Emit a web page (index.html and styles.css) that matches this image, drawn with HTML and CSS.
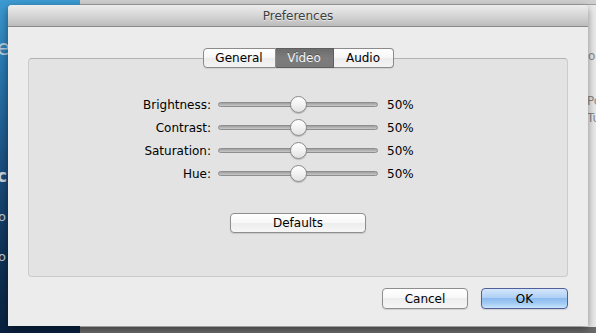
FILE: index.html
```html
<!DOCTYPE html>
<html lang="en">
<head>
  <meta charset="UTF-8">
  <meta name="viewport" content="width=device-width, initial-scale=1.0">
  <title>Preferences</title>
  <link rel="stylesheet" href="styles.css">
</head>
<body>
  <!-- Windows behind the sheet -->
  <div class="back back-left">
    <span class="frag frag-e">e</span>
    <span class="frag frag-c">c</span>
    <span class="frag frag-o1">o</span>
    <span class="frag frag-o2">o</span>
  </div>
  <div class="back back-right">
    <span class="frag frag-r1">o</span>
    <span class="frag frag-r2">Po</span>
    <span class="frag frag-r3">Tu</span>
  </div>

  <!-- Preferences dialog -->
  <div class="dialog">
    <div class="titlebar">Preferences</div>
    <div class="dialog-body">
      <div class="tabs">
        <button class="tab tab-general">General</button>
        <button class="tab tab-video active">Video</button>
        <button class="tab tab-audio">Audio</button>
      </div>

      <div class="panel">
        <div class="sliders">
          <label>Brightness:</label>
          <div class="slider"><span class="track"></span><span class="knob" style="left: 50%;"></span></div>
          <span class="value">50%</span>

          <label>Contrast:</label>
          <div class="slider"><span class="track"></span><span class="knob" style="left: 50%;"></span></div>
          <span class="value">50%</span>

          <label>Saturation:</label>
          <div class="slider"><span class="track"></span><span class="knob" style="left: 50%;"></span></div>
          <span class="value">50%</span>

          <label>Hue:</label>
          <div class="slider"><span class="track"></span><span class="knob" style="left: 50%;"></span></div>
          <span class="value">50%</span>
        </div>
        <button class="btn btn-defaults">Defaults</button>
      </div>

      <div class="actions">
        <button class="btn btn-cancel">Cancel</button>
        <button class="btn btn-ok">OK</button>
      </div>
    </div>
  </div>
</body>
</html>
```

FILE: styles.css
```css
body {
  margin: 0;
  padding: 5px 8px 7px 8px;
  width: 596px;
  height: 333px;
  box-sizing: border-box;
  overflow: hidden;
  position: relative;
  background-color: #6a6a6a;
  font-family: "DejaVu Sans", sans-serif;
  font-size: 12px;
  color: #000;
}

/* Background windows */
.back {
  position: absolute;
  top: 0;
  overflow: hidden;
}
.back-left {
  left: 0;
  width: 80px;
  height: 333px;
  background: linear-gradient(#3c9bd2 0%, #2878b0 20%, #1b4f80 50%, #0f3358 75%, #0a2240 100%);
}
.back-right {
  left: 80px;
  right: 0;
  height: 327px;
  background: linear-gradient(#cfcfcf 0, #cfcfcf 4px, #a0a0a0 4px, #a0a0a0 5px, #ebebeb 5px);
}
.frag {
  position: absolute;
  line-height: 1;
}
.frag-e {
  left: -3px;
  top: 38px;
  font-size: 21px;
  color: #b9cbd8;
}
.frag-c {
  left: -3px;
  top: 168px;
  font-size: 17px;
  font-weight: bold;
  color: #c9d2da;
}
.frag-o1 {
  left: -2px;
  top: 210px;
  font-size: 13px;
  color: #c2c8ce;
}
.frag-o2 {
  left: -2px;
  top: 250px;
  font-size: 13px;
  color: #c2c8ce;
}
.frag-r1 {
  left: 508px;
  top: 50px;
  font-size: 12px;
  color: #8a8a8a;
}
.frag-r2 {
  left: 507px;
  top: 95px;
  font-size: 12px;
  color: #8a8a8a;
}
.frag-r3 {
  left: 507px;
  top: 112px;
  font-size: 12px;
  color: #8a8a8a;
}

/* Dialog */
.dialog {
  position: relative;
  z-index: 2;
  width: 580px;
  height: 321px;
  background-color: #ececec;
  border-radius: 4px 4px 0 0;
  box-shadow: 0 3px 8px rgba(0, 0, 0, 0.45);
  display: flex;
  flex-direction: column;
}
.titlebar {
  height: 22px;
  box-sizing: border-box;
  border-radius: 4px 4px 0 0;
  border-bottom: 1px solid #8a8a8a;
  background: linear-gradient(#ececec, #d6d6d6 50%, #bcbcbc);
  text-align: center;
  line-height: 22px;
  color: #3e3e3e;
  text-shadow: 0 1px 0 rgba(255, 255, 255, 0.6);
}
.dialog-body {
  flex: 1;
  padding: 21px 20px 17px 20px;
  display: flex;
  flex-direction: column;
}

/* Tabs */
.tabs {
  display: flex;
  justify-content: center;
  position: relative;
  z-index: 1;
  height: 20px;
}
.tab {
  font-family: "DejaVu Sans", sans-serif;
  font-size: 12px;
  color: #000;
  height: 20px;
  padding: 0;
  margin: 0;
  border: 1px solid #8b8b8b;
  border-left: none;
  background: linear-gradient(#ffffff, #f6f6f6 50%, #ececec 50%, #f3f3f3);
  box-shadow: 0 1px 0 rgba(0, 0, 0, 0.08);
}
.tab-general {
  width: 73px;
  border-left: 1px solid #8b8b8b;
  border-radius: 4px 0 0 4px;
}
.tab-video {
  width: 58px;
}
.tab-audio {
  width: 60px;
  border-radius: 0 4px 4px 0;
}
.tab.active {
  background: linear-gradient(#6d6d6d, #7c7c7c 50%, #7a7a7a);
  color: #f4f4f4;
  text-shadow: 0 -1px 0 rgba(0, 0, 0, 0.35);
  border-color: #5e5e5e;
}

/* Panel */
.panel {
  margin-top: -10px;
  height: 219px;
  box-sizing: border-box;
  background-color: #e3e3e3;
  border: 1px solid #cbcbcb;
  border-top-color: #b3b3b3;
  border-radius: 4px;
  padding-top: 34px;
  display: flex;
  flex-direction: column;
}
.sliders {
  display: grid;
  grid-template-columns: 120px 160px 40px;
  grid-auto-rows: 23px;
  column-gap: 7px;
  align-items: center;
  margin-left: 62px;
}
.sliders label {
  text-align: right;
}
.sliders .value {
  margin-left: 2px;
}
.slider {
  position: relative;
  height: 23px;
}
.track {
  position: absolute;
  left: 0;
  right: 0;
  top: 9px;
  height: 3px;
  border: 1px solid #8e8e8e;
  border-radius: 3px;
  background: linear-gradient(#9f9f9f, #c9c9c9);
}
.knob {
  position: absolute;
  top: 3px;
  width: 15px;
  height: 15px;
  margin-left: -8px;
  border: 1px solid #8a8a8a;
  border-radius: 50%;
  background: linear-gradient(#ffffff, #f2f2f2 50%, #e2e2e2);
  box-shadow: 0 1px 1px rgba(0, 0, 0, 0.2);
}

/* Buttons */
.btn {
  font-family: "DejaVu Sans", sans-serif;
  font-size: 12px;
  color: #000;
  padding: 0;
  border: 1px solid #8e8e8e;
  border-radius: 4px;
  background: linear-gradient(#ffffff, #f7f7f7 50%, #ededed 50%, #f6f6f6);
  box-shadow: 0 1px 1px rgba(0, 0, 0, 0.12);
  cursor: pointer;
}
.btn-defaults {
  width: 136px;
  height: 20px;
  margin: 28px auto 0 auto;
}
.actions {
  display: flex;
  justify-content: flex-end;
  gap: 13px;
  margin-top: 11px;
}
.btn-cancel {
  width: 86px;
  height: 21px;
}
.btn-ok {
  width: 87px;
  height: 21px;
  border-color: #51609a;
  background: linear-gradient(#d4e6fb, #afd0f5 45%, #8dbbef 50%, #a2cbf5 75%, #c8e4fc);
}
```
